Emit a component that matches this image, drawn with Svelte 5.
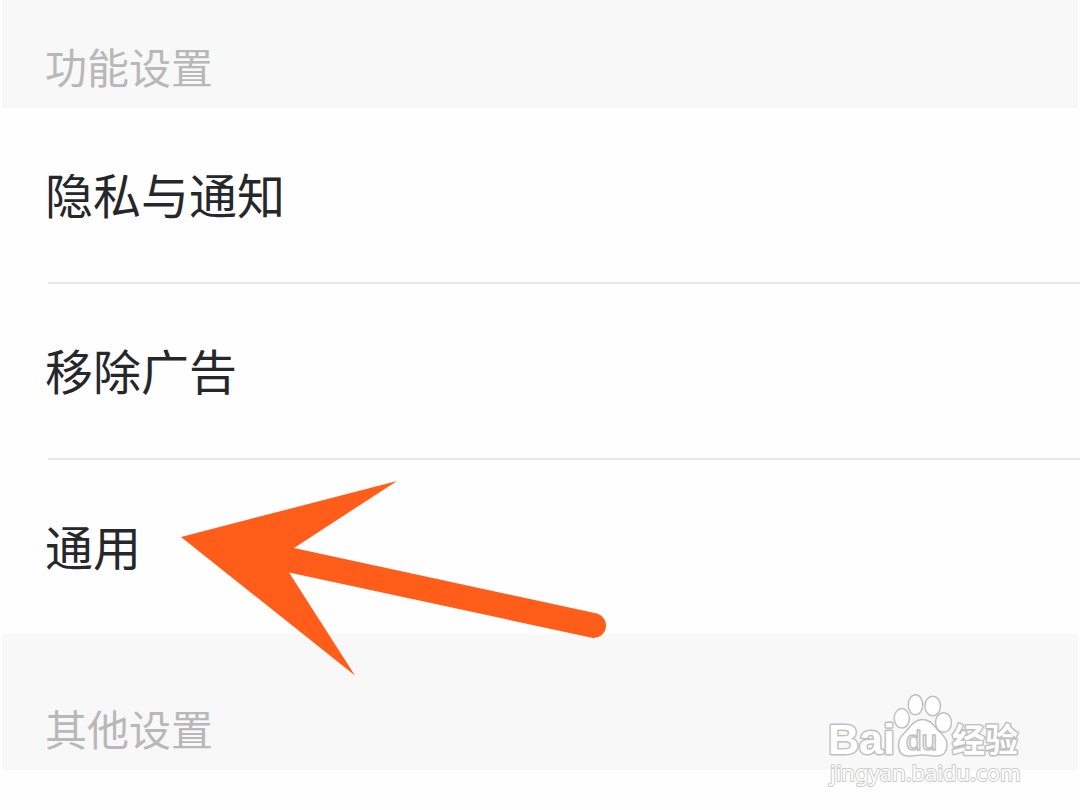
<script>
  const features = ['隐私与通知', '移除广告', '通用'];
</script>

<main>
  <section>
    <h2 class="first">功能设置</h2>
    <ul>
      {#each features as name, i}
        <li>
          <button type="button">{name}</button>
          {#if i === 2}
            <svg class="arrow" width="440" height="206" viewBox="175 475 440 206" aria-hidden="true">
              <path
                d="M181 537L397 481L294 548L597 613.500A12.500 12.500 0 0 1 593 638L289 572.500L355 675.500Z"
                fill="#ff5d19"
              />
            </svg>
          {/if}
        </li>
      {/each}
    </ul>
  </section>

  <section>
    <h2>其他设置</h2>
    <svg class="mark" width="210" height="110" viewBox="820 685 210 110">
      <g fill="#fff" stroke="#c0c0c0" stroke-width="3" stroke-linejoin="round" paint-order="stroke">
        <text class="latin" x="828" y="754" font-size="43">Bai</text>
        <text class="han" x="952" y="752" font-size="33">经验</text>
      </g>
      <g fill="#fff" stroke="#c0c0c0" stroke-width="1.500">
        <ellipse cx="901.800" cy="718.300" rx="7.600" ry="9.800" />
        <ellipse cx="915.500" cy="704.800" rx="7.300" ry="10" />
        <ellipse cx="932.700" cy="706" rx="7.800" ry="9.800" />
        <ellipse cx="943.500" cy="722.500" rx="8" ry="9.800" />
        <path
          d="M922.500 719.500C929 719.500 933 724 937 729C941 734 947 737 947 744.500C947 752 943 756 937 756C931 756 928 755 922.500 755C917 755 914 756 908 756C902 756 898.500 752 898.500 745C898.500 737 904 734 908 729C912 724 916 719.500 922.500 719.500Z"
        />
        <text class="du" x="906" y="750" font-size="28">du</text>
      </g>
      <g fill="#fff" stroke="#cbcbcb" stroke-width="2" stroke-linejoin="round" paint-order="stroke">
        <text class="site" x="830" y="781" font-size="22">jingyan.baidu.com</text>
      </g>
    </svg>
  </section>
</main>

<style>
  :global(body) {
    background: #fefefe;
  }

  main {
    min-height: 100vh;
    overflow: hidden;
    font-family: "Noto Sans CJK SC", sans-serif;
  }

  section {
    position: relative;
  }

  h2 {
    margin: 0 2px;
    padding: 64px 43px 12px;
    background: #f8f8f8;
    color: #b8b8b8;
    font-size: 42px;
    font-weight: 400;
    line-height: 60px;
  }

  .first {
    padding-top: 36px;
  }

  ul {
    margin: 0;
    padding: 0 0 0 48px;
    list-style: none;
  }

  li {
    position: relative;
  }

  li + li {
    border-top: 2px solid #e6e6e6;
  }

  button {
    display: block;
    width: 100%;
    margin: 0;
    padding: 50px 0 54px;
    border: 0;
    background: none;
    color: #26272a;
    font-family: inherit;
    font-size: 48px;
    line-height: 70px;
    text-align: left;
    text-indent: -3px;
  }

  .arrow {
    position: absolute;
    z-index: 1;
    top: 15px;
    left: 127px;
    pointer-events: none;
  }

  .mark {
    position: absolute;
    top: 51px;
    right: 50px;
  }

  .latin {
    font-family: "Liberation Sans", sans-serif;
    font-weight: 700;
  }

  .du {
    font-family: "Liberation Sans", sans-serif;
  }

  .han {
    font-family: "Noto Sans CJK SC", sans-serif;
    font-weight: 700;
  }

  .site {
    font-family: "Noto Sans", sans-serif;
  }
</style>
